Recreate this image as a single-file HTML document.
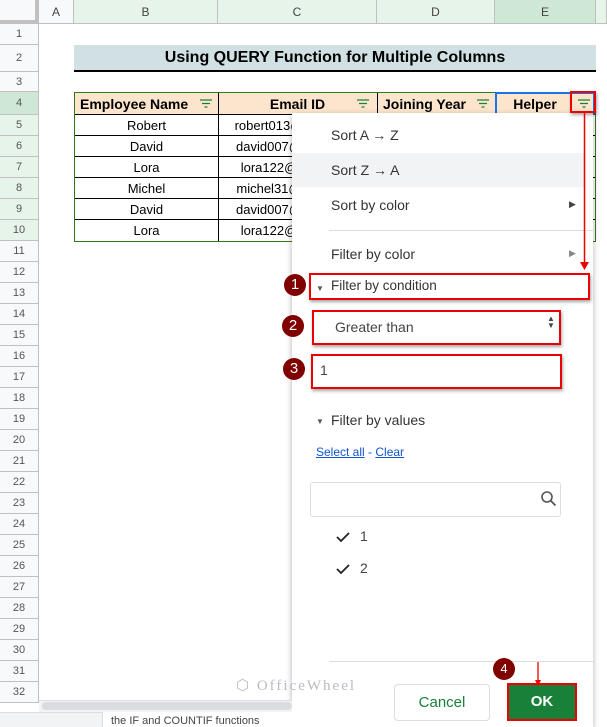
<!DOCTYPE html>
<html><head><style>
*{margin:0;padding:0;box-sizing:border-box}
body{width:607px;height:727px;overflow:hidden;background:#fff;font-family:"Liberation Sans",Arial,sans-serif;position:relative}
.a{position:absolute}
.rh{position:absolute;left:0;width:39px;background:#f8f9fa;border-bottom:1px solid #c0c0c0;border-right:1px solid #c0c0c0;color:#555;font-size:11px;text-align:center}
.ch{position:absolute;top:0;height:24px;background:#e6f4ea;border-right:1px solid #c0c0c0;border-bottom:1px solid #c0c0c0;color:#444;font-size:12px;text-align:center;line-height:24px}
.cell{position:absolute;font-size:13px;text-align:center;color:#000}
.mi{position:absolute;left:331px;font-size:14px;color:#333}
.red{position:absolute;border:2px solid #e00;box-shadow:1px 2px 3px rgba(0,0,0,.35)}
.num{position:absolute;width:22px;height:22px;border-radius:50%;background:#800000;color:#fff;font-size:15px;text-align:center;line-height:22px}
.fi{position:absolute;width:12px;height:9px}
</style></head><body>
<!-- column headers -->
<div class="a" style="left:0;top:0;width:39px;height:24px;background:#f8f9fa;border-right:4px solid #c0c0c0;border-bottom:4px solid #c0c0c0"></div>
<div class="ch" style="left:39px;width:35px;background:#f8f9fa">A</div>
<div class="ch" style="left:74px;width:144px">B</div>
<div class="ch" style="left:218px;width:159px">C</div>
<div class="ch" style="left:377px;width:118px">D</div>
<div class="ch" style="left:495px;width:101px;background:#cfe8d6">E</div>
<div class="ch" style="left:596px;width:11px"></div>
<!-- row headers -->
<div class="rh" style="top:24px;height:21px;line-height:21px">1</div>
<div class="rh" style="top:45px;height:27px;line-height:27px">2</div>
<div class="rh" style="top:72px;height:20px;line-height:20px">3</div>
<div class="rh" style="top:92px;height:23px;line-height:23px;background:#cfe8d6">4</div>
<div id="rows"></div>
<script>
var s='';for(var n=5;n<=32;n++){var t=115+(n-5)*21;s+='<div class="rh" style="top:'+t+'px;height:21px;line-height:21px;'+(n<=10?'background:#e6f4ea':'')+'">'+n+'</div>';}
document.getElementById('rows').outerHTML=s;
</script>
<!-- title -->
<div class="a" style="left:74px;top:45px;width:522px;height:27px;background:#d0e0e3;border-bottom:2px solid #000;font-weight:bold;font-size:16px;text-align:center;line-height:26px;padding-left:0">Using QUERY Function for Multiple Columns</div>
<!-- table -->
<div class="a" style="left:74px;top:92px;width:522px;height:150px;border:1px solid #38761d"></div>
<div class="a" style="left:75px;top:93px;width:520px;height:22px;background:#fce5cd;border-bottom:1px solid #000"></div>
<div class="cell" style="left:75px;top:96px;width:143px;font-weight:bold;font-size:14px;text-align:left;padding-left:5px">Employee Name</div>
<div class="cell" style="left:218px;top:96px;width:159px;font-weight:bold;font-size:14px">Email ID</div>
<div class="cell" style="left:377px;top:96px;width:118px;font-weight:bold;font-size:14px;text-align:left;padding-left:6px">Joining Year</div>
<div class="a" style="left:495px;top:92px;width:100px;height:23px;border:2px solid #1a73e8;border-bottom:none"></div>
<div class="cell" style="left:495px;top:96px;width:80px;font-weight:bold;font-size:14px">Helper</div>
<svg class="a" style="left:0;top:0" width="607" height="727">
<g stroke="#188038" stroke-width="1.3"><path d="M200 100h12M202 103.5h8M204.5 107h3"/><path d="M357 100h12M359 103.5h8M361.5 107h3"/><path d="M477 100h12M479 103.5h8M481.5 107h3"/><path d="M578 100h12M580 103.5h8M582.5 107h3"/></g>
</svg>
<div class="a" style="left:218px;top:93px;width:1px;height:148px;background:#000"></div>
<div class="a" style="left:377px;top:93px;width:1px;height:22px;background:#000"></div>
<div id="trows"></div>
<script>
var d=[["Robert","robert013@"],["David","david007@"],["Lora","lora122@"],["Michel","michel31@"],["David","david007@"],["Lora","lora122@"]],s='';
for(var i=0;i<6;i++){var t=115+i*21;s+='<div class="cell" style="left:75px;top:'+(t+3)+'px;width:143px">'+d[i][0]+'</div><div class="cell" style="left:219px;top:'+(t+3)+'px;width:100px">'+d[i][1]+'</div>';if(i<5)s+='<div class="a" style="left:75px;top:'+(t+20)+'px;width:520px;height:1px;background:#000"></div>';}
document.getElementById('trows').outerHTML=s;
</script>
<!-- menu -->
<div class="a" style="left:292px;top:113px;width:301px;height:614px;background:#fff;box-shadow:0 2px 6px rgba(0,0,0,.3)"></div>
<div class="a" style="left:292px;top:153px;width:293px;height:34px;background:#f1f3f4"></div>
<div class="mi" style="top:127px">Sort A → Z</div>
<div class="mi" style="top:162px">Sort Z → A</div>
<div class="mi" style="top:197px">Sort by color</div>
<div class="a" style="left:569px;top:199px;font-size:9px;color:#444">▶</div>
<div class="a" style="left:329px;top:230px;width:264px;height:1px;background:#ddd"></div>
<div class="mi" style="top:246px">Filter by color</div>
<div class="a" style="left:569px;top:248px;font-size:9px;color:#888">▶</div>
<div class="mi" style="top:278px;font-size:13.5px">Filter by condition</div>
<div class="a" style="left:316px;top:284px;font-size:8px;color:#555">▼</div>
<div class="a" style="left:335px;top:319px;font-size:14px;color:#444">Greater than</div>
<div class="a" style="left:547px;top:315px;font-size:8px;line-height:7px;color:#444">▲<br>▼</div>
<div class="a" style="left:320px;top:362px;font-size:14px;color:#444">1</div>
<div class="mi" style="top:412px">Filter by values</div>
<div class="a" style="left:316px;top:417px;font-size:8px;color:#555">▼</div>
<div class="a" style="left:316px;top:445px;font-size:12px;color:#1155cc"><u>Select all</u> - <u>Clear</u></div>
<div class="a" style="left:310px;top:482px;width:251px;height:35px;border:1px solid #ddd;border-radius:3px"></div>
<svg class="a" style="left:540px;top:490px" width="18" height="18"><circle cx="7" cy="7" r="5" stroke="#555" stroke-width="1.6" fill="none"/><path d="M11 11l4.5 4.5" stroke="#555" stroke-width="1.8"/></svg>
<svg class="a" style="left:336px;top:530px" width="16" height="50"><path d="M1 7l4 4 8-8M1 39l4 4 8-8" stroke="#222" stroke-width="1.8" fill="none"/></svg>
<div class="a" style="left:360px;top:528px;font-size:14px;color:#444">1</div>
<div class="a" style="left:360px;top:560px;font-size:14px;color:#444">2</div>
<div class="a" style="left:329px;top:661px;width:264px;height:1px;background:#ddd"></div>
<div class="a" style="left:394px;top:684px;width:96px;height:37px;border:1px solid #ddd;border-radius:4px;color:#188038;font-size:15px;text-align:center;line-height:36px">Cancel</div>
<div class="a" style="left:507px;top:683px;width:70px;height:38px;background:#188038;border:2px solid #e00;color:#fff;font-weight:bold;font-size:15px;text-align:center;line-height:34px">OK</div>
<!-- annotations -->
<div class="red" style="left:570px;top:91px;width:26px;height:22px"></div>
<svg class="a" style="left:0;top:0" width="607" height="727"><path d="M584.5 113v150" stroke="#e00" stroke-width="1.5"/><path d="M580 262l4.5 8 4.5-8z" fill="#e00"/><path d="M538 662v20" stroke="#e00" stroke-width="1.3"/><path d="M535 680l3 6 3-6z" fill="#e00"/></svg>
<div class="red" style="left:309px;top:273px;width:281px;height:27px"></div>
<div class="red" style="left:312px;top:310px;width:249px;height:35px"></div>
<div class="red" style="left:311px;top:354px;width:251px;height:35px"></div>
<div class="num" style="left:284px;top:274px">1</div>
<div class="num" style="left:282px;top:315px">2</div>
<div class="num" style="left:283px;top:358px">3</div>
<div class="num" style="left:493px;top:658px;font-size:13px">4</div>
<!-- watermark -->
<div class="a" style="left:236px;top:676px;font-family:'Liberation Serif',serif;font-size:15px;letter-spacing:2px;color:#b8bcc4">⬡ OfficeWheel</div>
<!-- bottom -->
<div class="a" style="left:39px;top:700px;width:253px;height:12px;background:#f1f3f4;border-top:1px solid #ddd"></div>
<div class="a" style="left:42px;top:702px;width:250px;height:8px;background:#dadce0;border-radius:4px"></div>
<div class="a" style="left:0;top:712px;width:292px;height:15px;background:#f1f3f4;border-top:1px solid #ddd"></div>
<div class="a" style="left:102px;top:712px;width:190px;height:15px;background:#fff;border-left:1px solid #ddd;font-size:11px;color:#444;padding:3px 0 0 8px;white-space:nowrap">the IF and COUNTIF functions</div>
</body></html>
